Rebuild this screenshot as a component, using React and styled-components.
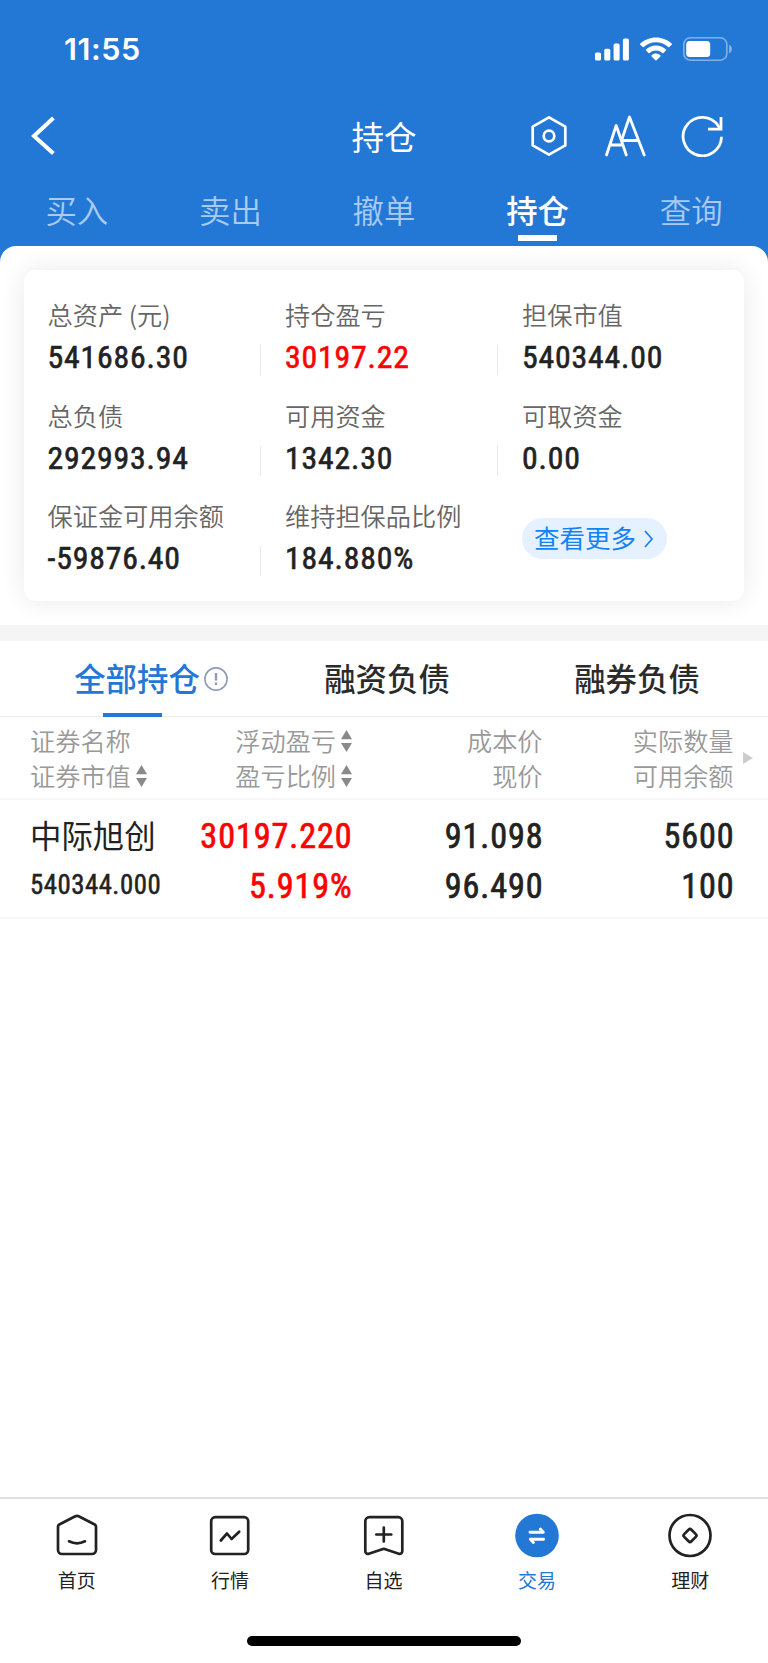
import React, { useState } from "react";
import styled, { createGlobalStyle } from "styled-components";

const GlobalStyle = createGlobalStyle`
  * {
    box-sizing: border-box;
  }
  body {
    margin: 0;
    background: #fff;
    color: #222;
    font-family: "Noto Sans CJK SC", sans-serif;
  }
  svg {
    display: block;
    flex-shrink: 0;
  }
`;

const tradeTabs = ["买入", "卖出", "撤单", "持仓", "查询"];

const summary = [
  { label: "总资产 (元)", value: "541686.30", divider: true },
  { label: "持仓盈亏", value: "30197.22", divider: true, up: true },
  { label: "担保市值", value: "540344.00", divider: false },
  { label: "总负债", value: "292993.94", divider: true },
  { label: "可用资金", value: "1342.30", divider: true },
  { label: "可取资金", value: "0.00" },
  { label: "保证金可用余额", value: "-59876.40", divider: true },
  { label: "维持担保品比例", value: "184.880%" },
];

const holdingTabs = ["全部持仓", "融资负债", "融券负债"];

const columns = [
  { lines: ["证券名称", "证券市值"], sort: [false, true] },
  { lines: ["浮动盈亏", "盈亏比例"], sort: [true, true] },
  { lines: ["成本价", "现价"], sort: [false, false] },
  { lines: ["实际数量", "可用余额"], sort: [false, false] },
];

const holdings = [
  {
    name: "中际旭创",
    market: "540344.000",
    profit: "30197.220",
    ratio: "5.919%",
    cost: "91.098",
    price: "96.490",
    amount: "5600",
    available: "100",
  },
];

const SignalIcon = () => (
  <svg width="34" height="23" viewBox="0 0 34 23" fill="#fff">
    <rect x="0" y="14.5" width="6" height="8" rx="1.6" />
    <rect x="9.3" y="10.7" width="6" height="11.8" rx="1.6" />
    <rect x="18.6" y="5.6" width="6" height="16.9" rx="1.6" />
    <rect x="27.9" y="0.4" width="6" height="22.1" rx="1.6" />
  </svg>
);

const WifiIcon = () => (
  <svg width="32" height="24" viewBox="0 0 32 24" fill="#fff">
    <path d="M16 .4C10 .4 4.400 2.700.3 6.600a.8.8 0 0 0 0 1.100l2.400 2.400c.3.3.8.3 1.100 0A17.600 17.600 0 0 1 28.200 10.100c.3.3.8.3 1.100 0l2.400-2.400a.8.8 0 0 0 0-1.100C27.600 2.700 22 .4 16 .4z" />
    <path d="M16 8.600c-3.700 0-7.200 1.400-9.900 3.900a.8.8 0 0 0 0 1.100l2.400 2.400c.3.3.8.3 1.100 0a9.600 9.600 0 0 1 12.800 0c.3.3.8.3 1.100 0l2.400-2.400a.8.8 0 0 0 0-1.100A14.600 14.600 0 0 0 16 8.600z" />
    <path d="M16 16.600c-1.700 0-3.200.6-4.400 1.600a.8.8 0 0 0 0 1.200l3.800 3.900c.3.3.8.3 1.100 0l3.900-3.900a.8.8 0 0 0 0-1.200A6.900 6.900 0 0 0 16 16.600z" />
  </svg>
);

const BatteryIcon = () => (
  <svg width="49" height="24" viewBox="0 0 49 24">
    <rect x="0.8" y="0.8" width="43" height="22.4" rx="6.5" fill="none" stroke="#fff" strokeOpacity="0.42" strokeWidth="1.6" />
    <rect x="3.2" y="4" width="24" height="16" rx="3.5" fill="#fff" />
    <path d="M46.200 7.800c1.600.7 2.600 2.300 2.600 4.200s-1 3.500-2.600 4.200z" fill="#fff" fillOpacity="0.48" />
  </svg>
);

const BackIcon = () => (
  <svg width="24" height="40" viewBox="0 0 24 40" fill="none" stroke="#fff" strokeWidth="4">
    <path d="M22.400 2 3 20 22.400 37.500" />
  </svg>
);

const HexIcon = () => (
  <svg width="40" height="42" viewBox="0 0 40 42" fill="none" stroke="#fff" strokeWidth="2.7" strokeLinejoin="round">
    <path d="M20 2.300 36.300 11.600V30.400L20 39.700 3.700 30.400V11.600z" />
    <circle cx="20" cy="21" r="5.3" />
  </svg>
);

const FontSizeIcon = () => (
  <svg width="42" height="42" viewBox="0 0 42 42" fill="none" stroke="#fff" strokeWidth="2.8" strokeLinejoin="round" strokeLinecap="round">
    <path d="M2.500 40 12.200 10.500 22.300 40M6.500 30H18.500" />
    <path d="M17.500 25.500 25.500 2 40.200 40M18.500 25.500H34" />
  </svg>
);

const RefreshIcon = () => (
  <svg width="42" height="42" viewBox="0 0 42 42" fill="none" stroke="#fff" strokeWidth="2.8">
    <path d="M40.500 21.800A19.200 19.200 0 1 1 37.500 11.200L39.500 14" />
    <path d="M40 2v12.200H27" />
  </svg>
);

const SortIcon = () => (
  <svg width="11" height="22" viewBox="0 0 11 22" fill="#8a8a8a">
    <path d="M5.500 0 11 9.300H0z" />
    <path d="M5.500 22 0 12.900h11z" />
  </svg>
);

const InfoIcon = () => (
  <svg width="24" height="24" viewBox="0 0 24 24" fill="none" stroke="#919bb4">
    <circle cx="12" cy="12" r="11.1" strokeWidth="1.6" />
    <path d="M12 6v7.400M12 15.600v2.400" strokeWidth="2.4" />
  </svg>
);

const HomeIcon = () => (
  <>
    <path d="M19.800 3.500a5 5 0 0 1 4.400 0l15.500 8a2.500 2.500 0 0 1 1.300 2.300V37a4 4 0 0 1-4 4H7a4 4 0 0 1-4-4V13.800a2.500 2.500 0 0 1 1.300-2.300z" />
    <path d="M14 28.300q8 4 16 0" />
  </>
);

const QuoteIcon = () => (
  <>
    <rect x="3.2" y="4.2" width="37" height="36.8" rx="4" />
    <path d="M12.800 27.500 19 20.500l4.600 5.500 7.600-7.200" />
  </>
);

const FavIcon = () => (
  <>
    <path d="M7.300 4.200h29a4 4 0 0 1 4 4v30a2.600 2.600 0 0 1-3.500 2.500L21.800 35.800 6.800 40.700A2.600 2.600 0 0 1 3.300 38.200v-30a4 4 0 0 1 4-4z" />
    <path d="M21.800 14.500v14M14.300 21.500h15" />
  </>
);

const TradeIcon = () => (
  <>
    <circle cx="22" cy="22.5" r="21.8" fill="#2478d5" stroke="none" />
    <path d="M15 19.200h13.300l-3-3.200M28.600 26.300H15.400l3 3.200" stroke="#fff" strokeWidth="2.9" />
  </>
);

const WealthIcon = () => (
  <>
    <circle cx="22" cy="22.5" r="20.5" />
    <rect x="16.9" y="17.4" width="10.2" height="10.2" rx="2" transform="rotate(45 22 22.5)" />
  </>
);

const navItems = [
  { label: "首页", Icon: HomeIcon },
  { label: "行情", Icon: QuoteIcon },
  { label: "自选", Icon: FavIcon },
  { label: "交易", Icon: TradeIcon },
  { label: "理财", Icon: WealthIcon },
];

const App = () => {
  const [tradeTab, setTradeTab] = useState("持仓");
  const [holdingTab, setHoldingTab] = useState("全部持仓");
  const [nav, setNav] = useState("交易");

  return (
    <Page>
      <GlobalStyle />
      <Header>
        <StatusBar>
          <Time>11:55</Time>
          <StatusIcons>
            <SignalIcon />
            <WifiIcon />
            <BatteryIcon />
          </StatusIcons>
        </StatusBar>
        <TitleBar>
          <BackIcon />
          <Title>持仓</Title>
          <Actions>
            <HexIcon />
            <FontSizeIcon />
            <RefreshIcon />
          </Actions>
        </TitleBar>
        <TradeTabs>
          {tradeTabs.map((tab) => (
            <TradeTab key={tab} $active={tab === tradeTab} onClick={() => setTradeTab(tab)}>
              {tab}
            </TradeTab>
          ))}
        </TradeTabs>
      </Header>

      <Sheet>
        <Card>
          {summary.map((item) => (
            <Stat key={item.label}>
              <StatLabel>{item.label}</StatLabel>
              <StatValue $up={item.up} $divider={item.divider}>
                {item.value}
              </StatValue>
            </Stat>
          ))}
          <More>
            <MoreText>查看更多</MoreText>
            <svg width="10" height="18" viewBox="0 0 10 18" fill="none" stroke="#1482f5" strokeWidth="1.7">
              <path d="M1 1 8 9 1 17" />
            </svg>
          </More>
        </Card>
      </Sheet>

      <HoldingTabs>
        {holdingTabs.map((tab) => (
          <HoldingTab key={tab} $active={tab === holdingTab} onClick={() => setHoldingTab(tab)}>
            {tab}
            {tab === "全部持仓" && (
              <TabInfo>
                <InfoIcon />
              </TabInfo>
            )}
          </HoldingTab>
        ))}
      </HoldingTabs>

      <TableHead>
        {columns.map((col) => (
          <HeadCell key={col.lines[0]}>
            {col.lines.map((line, i) => (
              <HeadLine key={line}>
                {line}
                {col.sort[i] && <SortIcon />}
              </HeadLine>
            ))}
          </HeadCell>
        ))}
        <ScrollHint />
      </TableHead>

      {holdings.map((row) => (
        <Row key={row.name}>
          <Cell>
            <StockName>{row.name}</StockName>
            <Num $small>{row.market}</Num>
          </Cell>
          <Cell>
            <Num $up>{row.profit}</Num>
            <Num $up>{row.ratio}</Num>
          </Cell>
          <Cell>
            <Num>{row.cost}</Num>
            <Num>{row.price}</Num>
          </Cell>
          <Cell>
            <Num>{row.amount}</Num>
            <Num>{row.available}</Num>
          </Cell>
        </Row>
      ))}

      <BottomBar>
        <NavList>
          {navItems.map(({ label, Icon }) => (
            <NavItem key={label} $active={label === nav} onClick={() => setNav(label)}>
              <svg
                width="44"
                height="45"
                viewBox="0 0 44 45"
                fill="none"
                stroke="#222"
                strokeWidth="2.7"
                strokeLinecap="round"
                strokeLinejoin="round"
              >
                <Icon />
              </svg>
              {label}
            </NavItem>
          ))}
        </NavList>
        <HomeIndicator />
      </BottomBar>
    </Page>
  );
};

const Page = styled.div`
  display: flex;
  flex-direction: column;
  width: 768px;
  height: 1663px;
  overflow: hidden;
`;

const Header = styled.header`
  height: 262px;
  flex-shrink: 0;
  background: #2478d5;
  color: #fff;
`;

const StatusBar = styled.div`
  display: flex;
  align-items: center;
  justify-content: space-between;
  height: 98px;
  padding: 0 36px 0 64px;
`;

const Time = styled.div`
  font-family: Inter, sans-serif;
  font-size: 30.5px;
  font-weight: 600;
  letter-spacing: 0.6px;
  line-height: 36px;
`;

const StatusIcons = styled.div`
  display: flex;
  align-items: center;
  gap: 11px;
`;

const TitleBar = styled.div`
  display: grid;
  grid-template-columns: 1fr auto 1fr;
  align-items: center;
  height: 76px;
  padding: 0 45px 0 31px;
`;

const Title = styled.h1`
  margin: 0 -7px 1px 7px;
  font-size: 32.5px;
  font-weight: 380;
  line-height: 48px;
`;

const Actions = styled.div`
  display: flex;
  justify-content: flex-end;
  gap: 35px;
`;

const TradeTabs = styled.nav`
  display: flex;
  height: 72px;
`;

const TradeTab = styled.div`
  display: flex;
  flex: 1;
  flex-direction: column;
  align-items: center;
  padding-top: 13px;
  font-size: 31.4px;
  line-height: 46px;
  font-weight: ${({ $active }) => ($active ? 500 : 330)};
  color: ${({ $active }) => ($active ? "#fff" : "#a9cbf2")};
  &::after {
    content: "";
    width: 39px;
    height: 6px;
    margin-top: 1.5px;
    background: ${({ $active }) => ($active ? "#fff" : "transparent")};
  }
`;

const Sheet = styled.section`
  height: 395px;
  flex-shrink: 0;
  margin-top: -16px;
  padding: 24px 24px 0;
  overflow: hidden;
  background: #fff;
  border-radius: 16px 16px 0 0;
  border-bottom: 16px solid #f5f5f5;
`;

const Card = styled.div`
  display: grid;
  grid-template-columns: 237.5px 237px 1fr;
  grid-auto-rows: 100.5px;
  height: 331px;
  padding: 25px 0 0 23.5px;
  background: #fff;
  border-radius: 12px;
  box-shadow: 0 0 26px rgba(0, 0, 0, 0.09);
`;

const Stat = styled.div`
  display: flex;
  flex-direction: column;
`;

const StatLabel = styled.div`
  font-size: 25.2px;
  font-weight: 350;
  line-height: 38px;
  color: #666;
`;

const StatValue = styled.div`
  margin-top: 12px;
  border-right: 1px solid ${({ $divider }) => ($divider ? "#e9e9e9" : "transparent")};
  height: 30px;
  width: 213px;
  font-family: Roboto, sans-serif;
  font-stretch: 75%;
  font-size: 31.8px;
  font-weight: 400;
  -webkit-text-stroke: 0.6px;
  letter-spacing: 0.8px;
  line-height: 24px;
  color: ${({ $up }) => ($up ? "#fd0100" : "#222")};
`;

const More = styled.div`
  display: flex;
  align-items: center;
  gap: 8px;
  width: 145px;
  height: 41px;
  margin-top: 22px;
  padding-left: 12px;
  background: #e5f1ff;
  border-radius: 21px;
  color: #1482f5;
`;

const MoreText = styled.span`
  font-size: 25.5px;
  line-height: 38px;
  padding-bottom: 3px;
`;

const HoldingTabs = styled.nav`
  display: flex;
  height: 76px;
  flex-shrink: 0;
  padding: 0 6px 0 12px;
  border-bottom: 1px solid #ececec;
`;

const HoldingTab = styled.div`
  position: relative;
  display: flex;
  flex: 1;
  justify-content: center;
  padding-top: 13px;
  font-size: 31.4px;
  font-weight: 480;
  line-height: 47px;
  color: ${({ $active }) => ($active ? "#2478d5" : "#2b2b2b")};
  &::after {
    content: "";
    position: absolute;
    left: 90.5px;
    bottom: -1px;
    width: 59px;
    height: 4px;
    background: ${({ $active }) => ($active ? "#2478d5" : "transparent")};
  }
`;

const TabInfo = styled.span`
  position: absolute;
  left: 192px;
  top: 26px;
`;

const TableHead = styled.div`
  display: grid;
  grid-template-columns: 170px 152px 190.5px 191px 1fr;
  height: 83px;
  flex-shrink: 0;
  padding: 6px 0 0 30px;
  border-bottom: 2px solid #f7f7f7;
`;

const HeadCell = styled.div`
  display: flex;
  flex-direction: column;
  align-items: flex-end;
  &:first-child {
    align-items: flex-start;
  }
`;

const HeadLine = styled.div`
  display: flex;
  align-items: center;
  gap: 5px;
  height: 35px;
  font-size: 25.2px;
  font-weight: 350;
  line-height: 35px;
  color: #999;
`;

const ScrollHint = styled.div`
  margin: 29px 0 0 9.5px;
  width: 0;
  height: 0;
  border: 6.5px solid transparent;
  border-left: 10px solid #ccc;
  border-right: 0;
`;

const Row = styled.div`
  display: grid;
  grid-template-columns: 170px 152.5px 191px 191px;
  height: 119px;
  flex-shrink: 0;
  padding: 11px 0 0 30px;
  border-bottom: 2px solid #f7f7f7;
`;

const Cell = styled.div`
  display: flex;
  flex-direction: column;
  align-items: flex-end;
  &:first-child {
    align-items: flex-start;
  }
`;

const StockName = styled.div`
  height: 50px;
  font-size: 31.4px;
  font-weight: 380;
  line-height: 47px;
`;

const Num = styled.div`
  font-family: Roboto, sans-serif;
  font-stretch: 75%;
  font-size: ${({ $small }) => ($small ? "26.8px" : "34.2px")};
  font-weight: 400;
  -webkit-text-stroke: ${({ $small }) => ($small ? "0.5px" : "0.7px")};
  letter-spacing: ${({ $small }) => ($small ? "0.5px" : "0.9px")};
  line-height: ${({ $small }) => ($small ? "48px" : "50px")};
  color: ${({ $up }) => ($up ? "#fd0100" : "#222")};
`;

const BottomBar = styled.footer`
  display: flex;
  flex-direction: column;
  align-items: center;
  height: 166px;
  margin-top: auto;
  border-top: 2px solid #e0e0e0;
`;

const NavList = styled.div`
  display: flex;
  width: 100%;
  height: 137px;
  padding: 14px 1px 0 0;
`;

const NavItem = styled.div`
  display: flex;
  flex: 1;
  flex-direction: column;
  align-items: center;
  gap: 8px;
  font-size: 19px;
  line-height: 28px;
  color: ${({ $active }) => ($active ? "#2478d5" : "#222")};
`;

const HomeIndicator = styled.div`
  width: 274px;
  height: 10px;
  background: #000;
  border-radius: 5px;
`;

export default App;
